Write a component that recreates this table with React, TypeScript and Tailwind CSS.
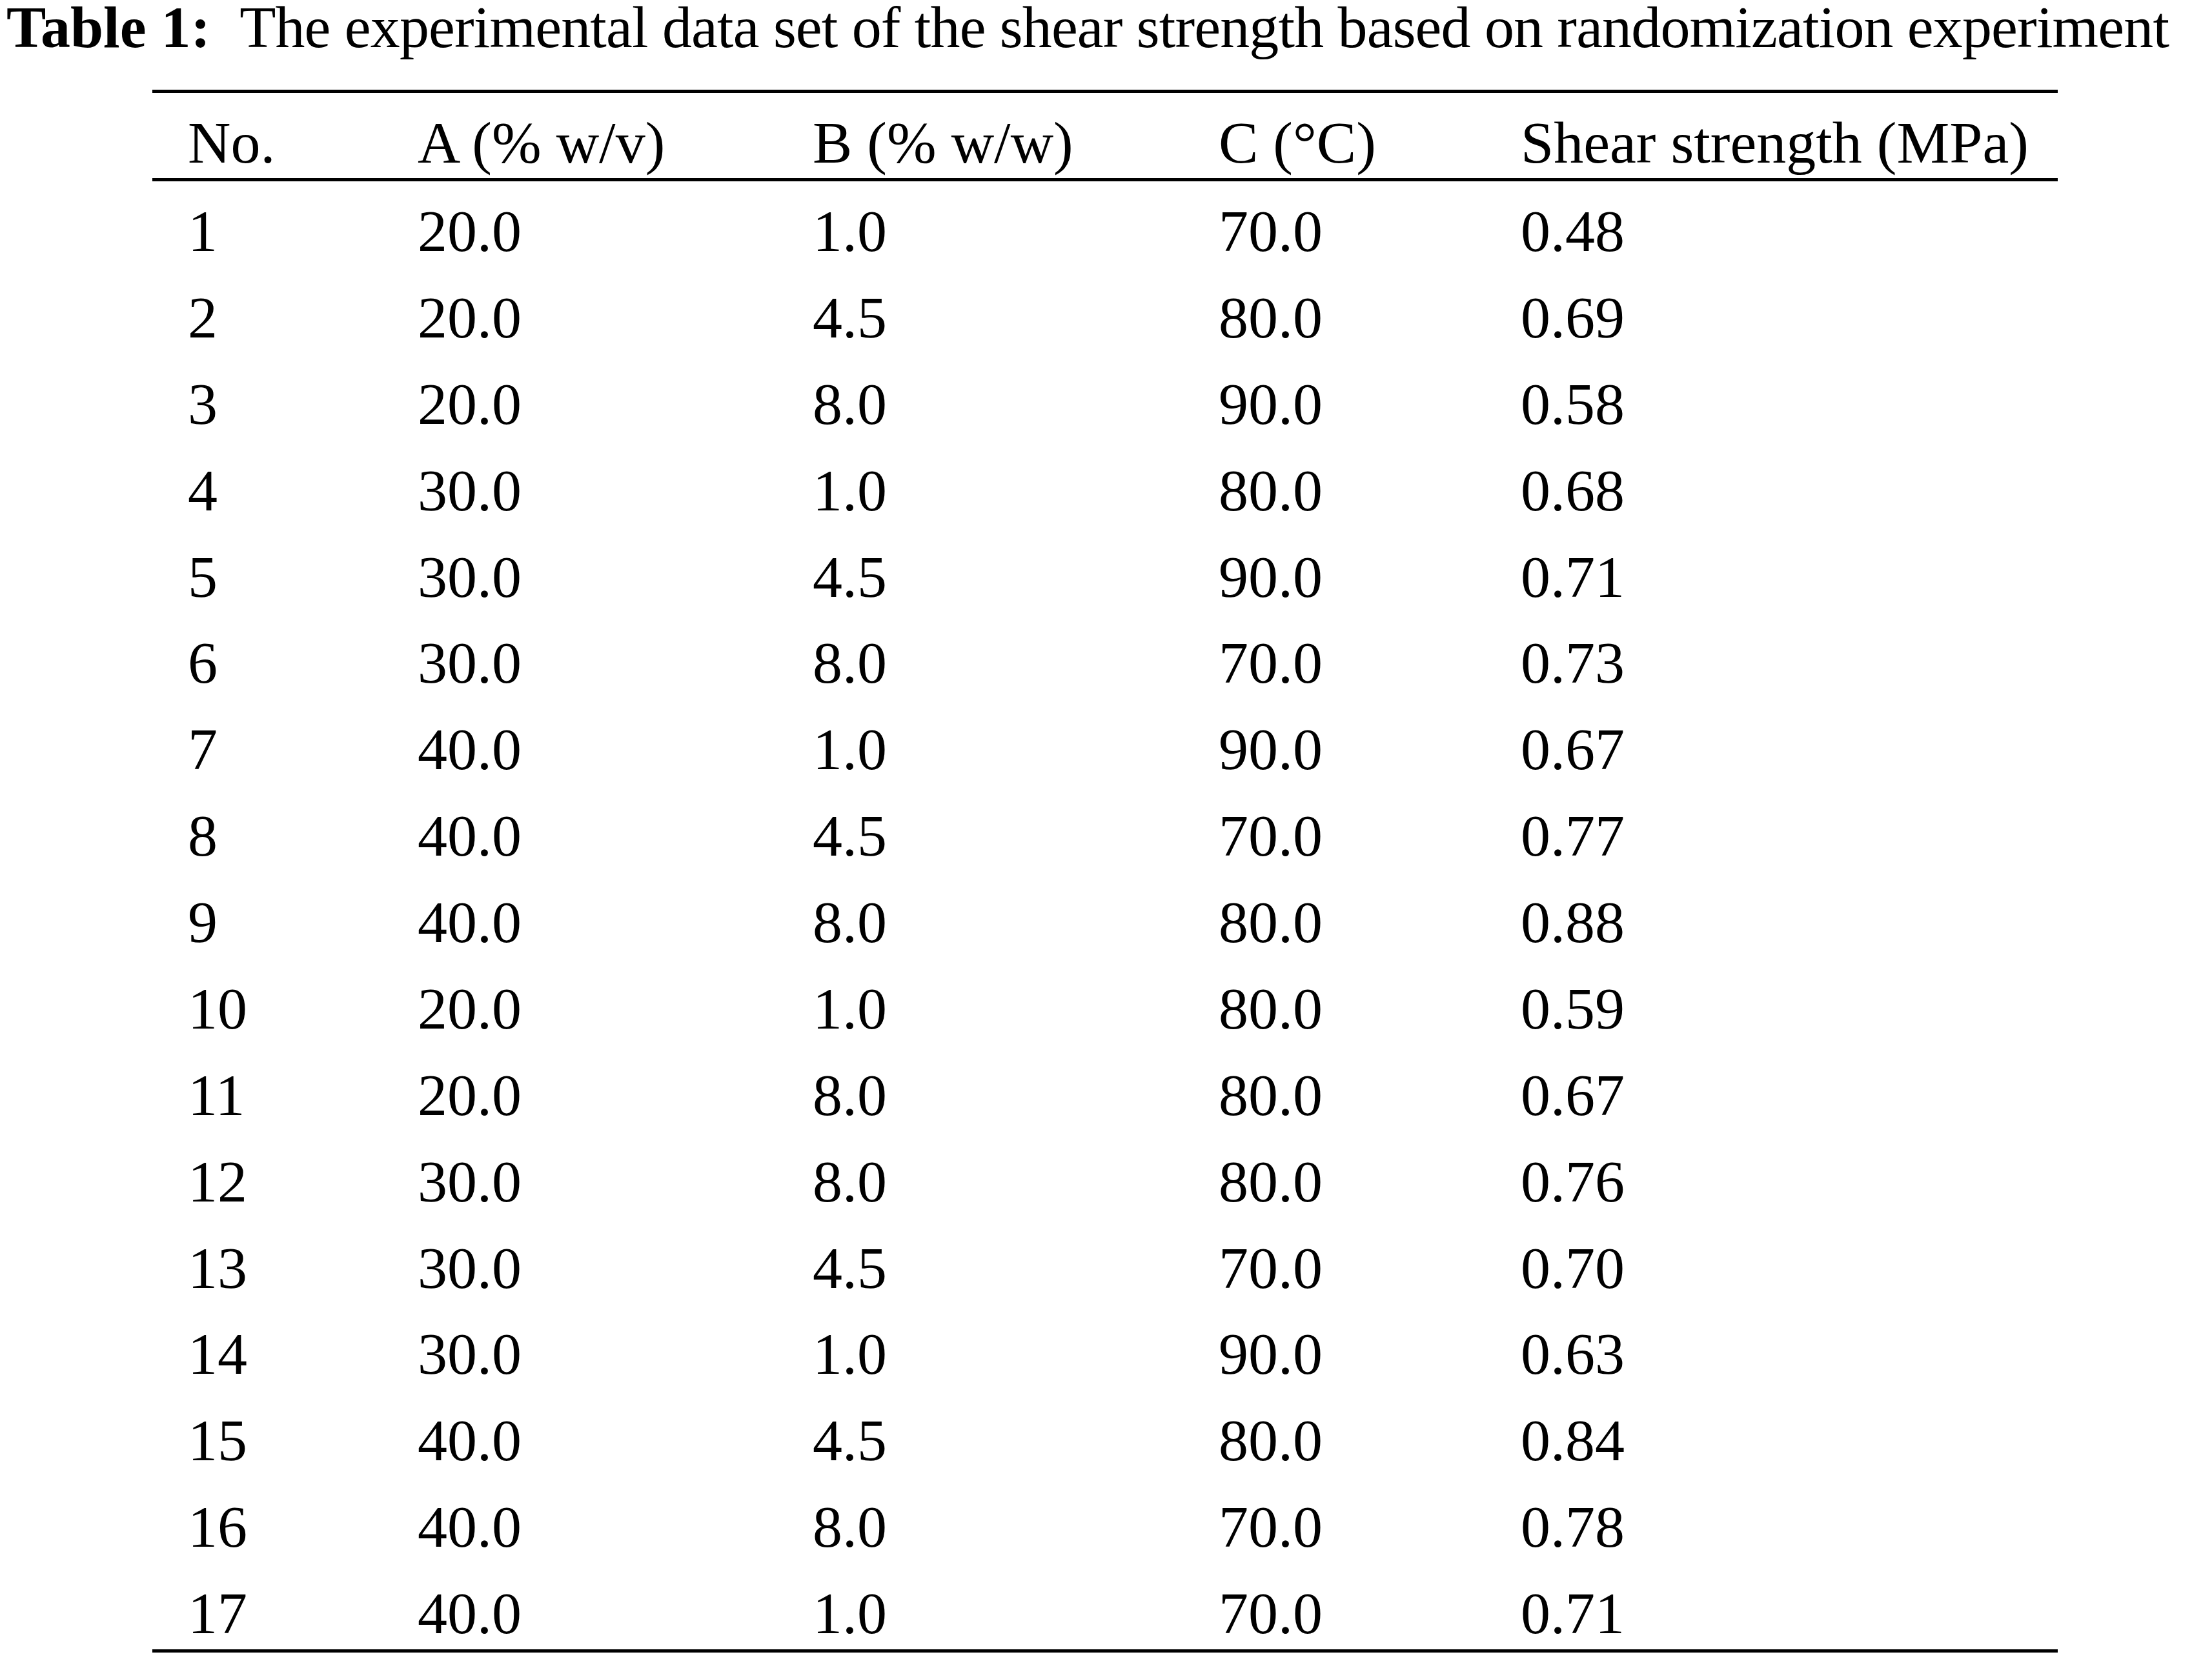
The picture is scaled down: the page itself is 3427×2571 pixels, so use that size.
const header = ['No.', 'A (% w/v)', 'B (% w/w)', 'C (°C)', 'Shear strength (MPa)']

const rows: [number, string, string, string, string][] = [
  [1, '20.0', '1.0', '70.0', '0.48'],
  [2, '20.0', '4.5', '80.0', '0.69'],
  [3, '20.0', '8.0', '90.0', '0.58'],
  [4, '30.0', '1.0', '80.0', '0.68'],
  [5, '30.0', '4.5', '90.0', '0.71'],
  [6, '30.0', '8.0', '70.0', '0.73'],
  [7, '40.0', '1.0', '90.0', '0.67'],
  [8, '40.0', '4.5', '70.0', '0.77'],
  [9, '40.0', '8.0', '80.0', '0.88'],
  [10, '20.0', '1.0', '80.0', '0.59'],
  [11, '20.0', '8.0', '80.0', '0.67'],
  [12, '30.0', '8.0', '80.0', '0.76'],
  [13, '30.0', '4.5', '70.0', '0.70'],
  [14, '30.0', '1.0', '90.0', '0.63'],
  [15, '40.0', '4.5', '80.0', '0.84'],
  [16, '40.0', '8.0', '70.0', '0.78'],
  [17, '40.0', '1.0', '70.0', '0.71'],
]

const cols = 'grid grid-cols-[356px_612px_629px_468px_1fr] pl-[55px]'

export default function App() {
  return (
    <div className="w-[3427px] h-[2571px] bg-white text-black overflow-hidden font-['Liberation_Serif','Times_New_Roman',serif] text-[92px]">
      <div className="pl-[10px] leading-[84px] whitespace-nowrap">
        <span className="font-bold">Table 1:</span>
        <span className="ml-[45px] tracking-[-0.85px]">The experimental data set of the shear strength based on randomization experiment</span>
      </div>

      <div className="ml-[236px] w-[2952px] mt-[55px]">
        <div className="h-[5px] bg-black" />
        <div className={`${cols} pt-[27px] pb-[5px] leading-[100px] whitespace-nowrap`}>
          {header.map((h) => (
            <div key={h}>{h}</div>
          ))}
        </div>
        <div className="h-[5px] bg-black" />
        <div className="pt-[22px] pb-[1px] flex flex-col gap-y-[23.875px] leading-[110px]">
          {rows.map((r) => (
            <div key={r[0]} className={cols}>
              {r.map((cell, i) => (
                <div key={i}>{cell}</div>
              ))}
            </div>
          ))}
        </div>
        <div className="h-[5px] bg-black" />
      </div>
    </div>
  )
}
